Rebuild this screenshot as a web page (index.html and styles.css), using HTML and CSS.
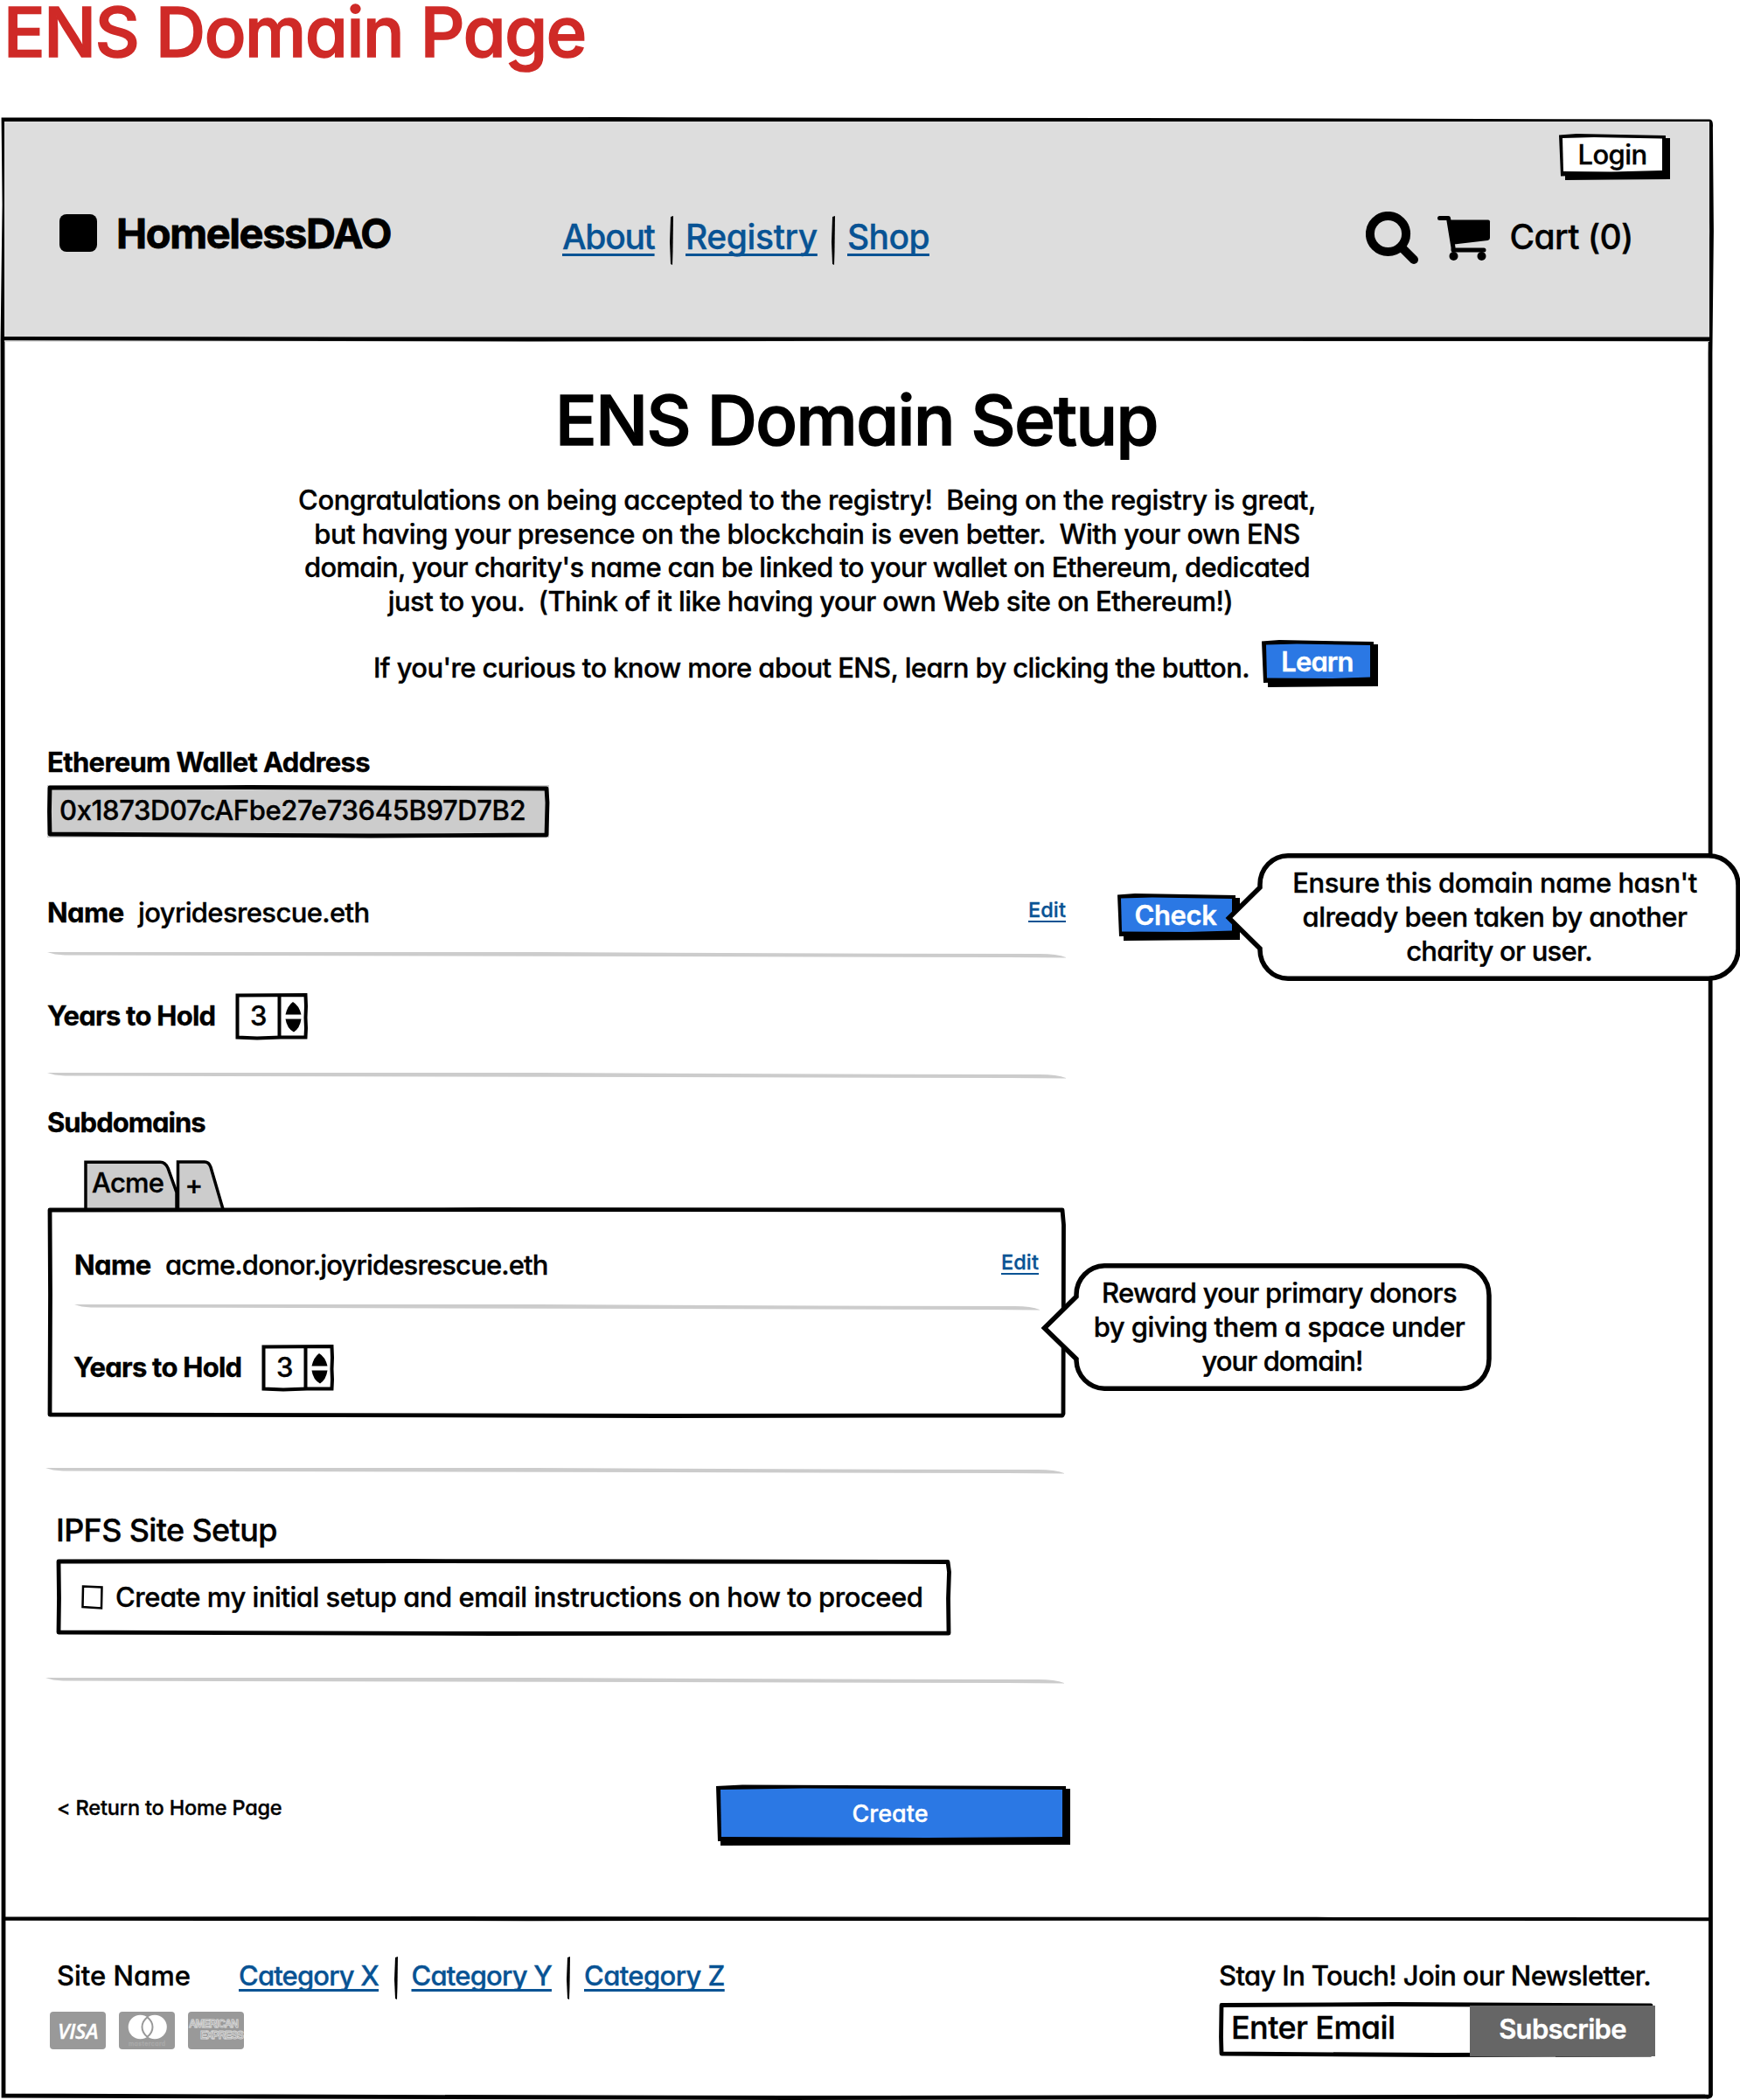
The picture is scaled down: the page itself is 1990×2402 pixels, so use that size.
FILE: index.html
```
<!DOCTYPE html>
<html lang="en">
<head>
<meta charset="utf-8">
<title>ENS Domain Page</title>
<link rel="stylesheet" href="styles.css">
</head>
<body>
<h1 class="page-title">ENS Domain Page</h1>
<div class="frame">
  <svg class="sketch frame-lines" viewBox="0 0 1960 2268" preserveAspectRatio="none">
    <path d="M4 3 L700 2.500 L1300 3.500 L1955 5 Q1957 5 1956.500 12 L1957.500 130 L1956 270 L1956.500 2262 Q1956 2265 1950 2264 L900 2265.500 L300 2264 L4 2263 L4 1200 L3 255 L5 100 Z"/>
  </svg>
  <header class="header">
    <div class="login-row">
      <a class="btn btn-login"><svg class="sketch" viewBox="0 0 127 53" preserveAspectRatio="none"><path class="shade" d="M7 5H127V52L60 52.500 7 53Z"/><path class="edge" d="M0 1.500 20 0 122 2V48L50 47 2 48.500Z"/><path class="white" d="M4 5 40 4 118 5.500V42L60 43.500 5 43Z"/></svg><span class="t-login">Login</span></a>
    </div>
    <div class="bar">
      <div class="logo"><span class="logo-mark"></span><span class="t-brand">HomelessDAO</span></div>
      <nav class="nav">
        <a class="link t-about">About</a>
        <svg class="sep" width="4" height="56" viewBox="0 0 4 56"><path d="M1 1 4 0 3.500 40 3 56 1 55 0 30Z"/></svg>
        <a class="link t-registry">Registry</a>
        <svg class="sep" width="4" height="56" viewBox="0 0 4 56"><path d="M1 1 4 0 3.500 40 3 56 1 55 0 30Z"/></svg>
        <a class="link t-shop">Shop</a>
      </nav>
      <div class="tools">
        <svg class="search" width="62" height="62" viewBox="0 0 62 62"><circle cx="25.500" cy="25.500" r="20.600"/><path d="M41 41 55 55"/></svg>
        <svg class="cart" width="61" height="62" viewBox="0 0 61 62"><path class="cart-line" d="M2.500 7.500H12.500L18 41V44H53"/><path d="M12 9.500H58Q60 9.500 60 11.500V30Q60 32.500 57.500 33L19 37.500Z"/><circle cx="18.500" cy="51" r="5"/><circle cx="50.500" cy="51" r="5"/></svg>
        <span class="t-cart">Cart (0)</span>
      </div>
    </div>
    <svg class="rule-black" viewBox="0 0 1950 7" preserveAspectRatio="none"><path d="M0 0 400 .5 1100 .8 1950 .5V6L1100 5.500 600 6.500 0 5Z"/></svg>
  </header>

  <main class="main">
    <h2 class="heading">ENS Domain Setup</h2>
    <p class="intro">
      <span class="line l1">Congratulations on being accepted to the registry!&nbsp; Being on the registry is great,</span>
      <span class="line l2">but having your presence on the blockchain is even better.&nbsp; With your own ENS</span>
      <span class="line l3">domain, your charity's name can be linked to your wallet on Ethereum, dedicated</span>
      <span class="line l4">just to you.&nbsp; (Think of it like having your own Web site on Ethereum!)</span>
    </p>
    <div class="learn">
      <span class="learn-text">If you're curious to know more about ENS, learn by clicking the button.</span>
      <a class="btn btn-learn"><svg class="sketch" viewBox="0 0 133 54" preserveAspectRatio="none"><path class="shade" d="M7 5H133V53L60 53.500 7 54Z"/><path class="edge" d="M0 1.500 20 0 128 2V49L50 48 2 49Z"/><path class="blue" d="M5 5.500 40 4.500 124 6V42.500L80 44 6 43.500Z"/></svg><span class="t-learn">Learn</span></a>
    </div>

    <label class="label wallet-label">Ethereum Wallet Address</label>
    <div class="wallet">
      <svg class="sketch" viewBox="0 0 574 60" preserveAspectRatio="none"><path class="grey" d="M0 0H574V60H0Z"/><path class="stroke" d="M3 3 230 2.500 571 4 572 20 571 57 370 58 3 56 2.500 30Z"/></svg>
      <span class="t-wallet">0x1873D07cAFbe27e73645B97D7B2</span>
    </div>

    <div class="name-row">
      <div class="field">
        <b class="label t-name">Name</b><span class="value t-domain">joyridesrescue.eth</span><a class="edit">Edit</a>
      </div>
      <a class="btn btn-check"><svg class="sketch" viewBox="0 0 140 54" preserveAspectRatio="none"><path class="shade" d="M7 5H140V53L60 53.500 7 54Z"/><path class="edge" d="M0 1.500 20 0 135 2V49L50 48 2 49Z"/><path class="blue" d="M4 5.500 40 4.500 131 6V42.500L80 44 5 43.500Z"/></svg><span class="t-check">Check</span></a>
      <div class="bubble bubble-check">
        <svg class="sketch" viewBox="0 0 590 146"><path class="bubble-line" d="M72 2.750H553A34 34 0 0 1 587 36.750V109.250A34 34 0 0 1 553 143.250H72A32 33 0 0 1 40 110.250V109L4.500 74 40 39V35.750A32 33 0 0 1 72 2.750Z"/></svg>
        <span class="line b1">Ensure this domain name hasn't</span>
        <span class="line b2">already been taken by another</span>
        <span class="line b3">charity or user.</span>
      </div>
    </div>
    <svg class="hr hr-a" viewBox="0 0 1165 8" preserveAspectRatio="none"><path d="M0 1H560L900 2.500 1135 3Q1155 3 1165 7V7.500L1100 7 700 6 20 4.500Q8 4 0 1Z"/></svg>

    <div class="years years-a">
      <b class="label t-years">Years to Hold</b>
      <div class="stepper">
        <svg class="sketch" viewBox="0 0 83 53"><path class="box" d="M2.500 2.500 80.500 2 81 15 80.500 28 81 40 80.500 50.500 52 50.500 25 51.500 2.500 50.500Z"/><path class="box" d="M50.500 2V51"/><path class="arrow" d="M57.500 24.500Q60 14 66 10Q73 14 75.500 24.500ZM57.500 29.500H75.500Q74 40 67 44.500Q59 40 57.500 29.500Z"/></svg>
        <span>3</span>
      </div>
    </div>
    <svg class="hr hr-b" viewBox="0 0 1165 8" preserveAspectRatio="none"><path d="M0 1H560L900 2.500 1135 3Q1155 3 1165 7V7.500L1100 7 700 6 20 4.500Q8 4 0 1Z"/></svg>

    <b class="label sub-label">Subdomains</b>
    <div class="tabs">
      <div class="tab tab-acme"><svg class="sketch" viewBox="0 0 106.500 55"><path d="M2 57V3H88Q94 3 97 10L107 38V57"/></svg><span class="t-acme">Acme</span></div>
      <div class="tab tab-add"><svg class="sketch" viewBox="0 0 56 55"><path d="M1.500 57V3H32Q37 3 39 9L53 57"/></svg><span>+</span></div>
    </div>
    <section class="panel">
      <svg class="sketch" viewBox="0 0 1165 241" preserveAspectRatio="none"><path class="stroke paper" d="M3 3 500 2.500 1161 3 1162.500 20 1162 236 1161 238 700 238.500 3 237 3.500 100Z"/></svg>
      <div class="field inner-name">
        <b class="label t-name">Name</b><span class="value t-sub">acme.donor.joyridesrescue.eth</span><a class="edit">Edit</a>
      </div>
      <svg class="hr hr-in" viewBox="0 0 1165 8" preserveAspectRatio="none"><path d="M0 1H560L900 2.500 1135 3Q1155 3 1165 7V7.500L1100 7 700 6 20 4.500Q8 4 0 1Z"/></svg>
      <div class="years years-in">
        <b class="label t-years">Years to Hold</b>
        <div class="stepper">
          <svg class="sketch" viewBox="0 0 83 53"><path class="box" d="M2.500 2.500 80.500 2 81 15 80.500 28 81 40 80.500 50.500 52 50.500 25 51.500 2.500 50.500Z"/><path class="box" d="M50.500 2V51"/><path class="arrow" d="M57.500 24.500Q60 14 66 10Q73 14 75.500 24.500ZM57.500 29.500H75.500Q74 40 67 44.500Q59 40 57.500 29.500Z"/></svg>
          <span>3</span>
        </div>
      </div>
      <div class="bubble bubble-reward">
        <svg class="sketch" viewBox="0 0 518 146"><path class="bubble-line" d="M73 2.750H481A32 34 0 0 1 513 36.750V109.250A32 34 0 0 1 481 143.250H73A33 33 0 0 1 41 111.250V109.500L4.500 74 41 38V35.750A33 33 0 0 1 73 2.750Z"/></svg>
        <span class="line r1">Reward your primary donors</span>
        <span class="line r2">by giving them a space under</span>
        <span class="line r3">your domain!</span>
      </div>
    </section>
    <svg class="hr hr-c" viewBox="0 0 1165 8" preserveAspectRatio="none"><path d="M0 1H560L900 2.500 1135 3Q1155 3 1165 7V7.500L1100 7 700 6 20 4.500Q8 4 0 1Z"/></svg>

    <h3 class="ipfs">IPFS Site Setup</h3>
    <div class="option">
      <svg class="sketch" viewBox="0 0 1024 88" preserveAspectRatio="none"><path class="stroke paper" d="M3 3 400 2.500 1020 3.500 1021.500 15 1020.500 45 1021 85 500 85.500 3 84 3.500 45Z"/></svg>
      <svg class="check" width="25" height="28" viewBox="0 0 25 28"><path d="M2 1.500 23.500 2.500 23 26.500 1.500 25Z"/></svg>
      <span class="t-option">Create my initial setup and email instructions on how to proceed</span>
    </div>
    <svg class="hr hr-d" viewBox="0 0 1165 8" preserveAspectRatio="none"><path d="M0 1H560L900 2.500 1135 3Q1155 3 1165 7V7.500L1100 7 700 6 20 4.500Q8 4 0 1Z"/></svg>

    <div class="actions">
      <a class="return">&lt; Return to Home Page</a>
      <a class="btn btn-create"><svg class="sketch" viewBox="0 0 405 70" preserveAspectRatio="none"><path class="shade" d="M5 5H405V69L200 69.500 5 70Z"/><path class="edge" d="M0 2 30 .5 400 2V65L150 64 2 65Z"/><path class="blue" d="M5 6 100 4.500 396 6V60L240 61 6 60Z"/></svg><span>Create</span></a>
    </div>
  </main>

  <footer class="footer">
    <svg class="rule-black" viewBox="0 0 1950 7" preserveAspectRatio="none"><path d="M0 .5 500 0 1500 1 1950 1.500V6L1300 5.500 600 6 0 5.500Z"/></svg>
    <div class="footer-cols">
      <div>
        <div class="foot-nav">
          <span class="t-site">Site Name</span>
          <a class="link cat t-x">Category X</a>
          <svg class="fsep" width="4" height="49" viewBox="0 0 4 49"><path d="M1 1 4 0 3.500 35 3 49 1 48 0 26Z"/></svg>
          <a class="link cat t-y">Category Y</a>
          <svg class="fsep" width="4" height="49" viewBox="0 0 4 49"><path d="M1 1 4 0 3.500 35 3 49 1 48 0 26Z"/></svg>
          <a class="link cat t-z">Category Z</a>
        </div>
        <div class="cards">
          <div class="card visa"><span>VISA</span></div>
          <div class="card mc"><svg width="64" height="43" viewBox="0 0 64 43"><circle cx="24.500" cy="17.500" r="13.800"/><circle cx="41" cy="17.500" r="13.800"/><path d="M32.500 6.200Q26.500 11 26.500 17.500T32.500 28.800Q38.500 24 38.500 17.500T32.500 6.200Z"/></svg><span>mastercard</span></div>
          <div class="card amex"><span>AMERICAN</span><span class="ex">EXPRESS</span></div>
        </div>
      </div>
      <div class="news">
        <span class="t-news">Stay In Touch! Join our Newsletter.</span>
        <div class="subscribe">
          <svg class="sketch" viewBox="0 0 499 63" preserveAspectRatio="none"><path class="stroke paper" d="M3 3.500 200 2.500 494 4V60L250 60.500 3 59 2.500 40Z"/></svg>
          <span class="t-email">Enter Email</span>
          <a class="sub-btn">Subscribe</a>
        </div>
      </div>
    </div>
  </footer>
</div>
</body>
</html>
```
FILE: styles.css
```
* { box-sizing: border-box; }
body {
  margin: 0;
  width: 1990px;
  height: 2402px;
  background: #fff;
  color: #000;
  font: 500 31px/38.4px Inter, "Open Sans", sans-serif;
  font-feature-settings: "cv11";
  text-underline-offset: 5px;
  -webkit-text-stroke: .35px;
}
h1, h2, h3, p { margin: 0; font-weight: 500; }
span, a, b { white-space: nowrap; }
svg { display: block; flex: none; }
.sketch { position: absolute; inset: 0; width: 100%; height: 100%; overflow: visible; }
.shade, .edge { fill: #000; }
.white { fill: #fff; }
.blue { fill: #2b78e4; }
.grey { fill: #ccc; }
.stroke { fill: none; stroke: #000; stroke-width: 4.8; stroke-linejoin: round; }
.paper { fill: #fff; }
.line { display: block; }

.page-title {
  height: 134px;
  padding-left: 4px;
  color: #cf2a27;
  font-size: 79px;
  line-height: 73px;
  letter-spacing: -1.35px;
  -webkit-text-stroke: 1.6px;
}
.frame { position: relative; width: 1960px; height: 2268px; padding: 5px 5px 0 5px; }
.frame-lines { fill: none; stroke: #000; stroke-width: 4.8; }

.header { position: relative; height: 252px; background: #ddd; padding-top: 14px; display: flex; flex-direction: column; }
.header .rule-black { margin-top: auto; }
.rule-black { width: 100%; height: 6px; fill: #000; }
.login-row { display: flex; justify-content: flex-end; padding-right: 45px; }
.btn { position: relative; display: flex; justify-content: center; flex: none; }
.btn span { position: relative; }
.btn-login { width: 127px; height: 53px; line-height: 47.5px; padding-right: 5px; }
.t-login { letter-spacing: -.6px; }
.bar { display: grid; grid-template-columns: 575px 918.5px auto; height: 62px; margin-top: 36px; padding-left: 63px; }
.logo { display: flex; align-items: center; height: 49px; font-size: 47px; font-weight: 700; }
.logo-mark { width: 43px; height: 43px; border-radius: 8px; background: #000; }
.t-brand { margin-left: 22px; padding-top: 1px; letter-spacing: -1.4px; -webkit-text-stroke: .8px; }
.nav { display: flex; align-items: center; height: 58px; font-size: 39px; }
.sep { margin: 7px 14px 0 17px; }
.link { color: #085394; text-decoration: underline; text-decoration-thickness: 2.5px; text-decoration-skip-ink: none; }
.t-about { width: 106px; letter-spacing: -1.3px; }
.t-registry { width: 150px; letter-spacing: -.4px; }
.t-shop { width: 95px; letter-spacing: -.6px; }
.tools { display: flex; }
.search { fill: none; stroke: #000; stroke-width: 10; stroke-linecap: round; }
.cart { margin-left: 20px; }
.cart-line { fill: none; stroke: #000; stroke-width: 5; stroke-linecap: round; stroke-linejoin: round; }
.t-cart { margin-left: 22px; height: 57px; line-height: 58px; font-size: 39px; letter-spacing: -.6px; }

.main { position: relative; height: 1801px; padding-left: 49px; display: flex; flex-direction: column; align-items: flex-start; }
.heading { align-self: center; height: 100px; margin: 39px 50px 0 0; font-size: 79px; line-height: 100px; letter-spacing: -1.47px; -webkit-text-stroke: 1.6px; }
.intro { width: 1162px; margin: 23.3px 0 0 288px; text-align: center; }
.l1 { letter-spacing: -.46px; margin: 0 -2px; }
.l2 { letter-spacing: -.53px; }
.l3 { letter-spacing: -.68px; }
.l4 { letter-spacing: -.57px; padding-left: 8px; }
.learn { display: flex; align-items: center; height: 54px; margin: 25px 0 0 373px; }
.learn-text { width: 1016px; padding-top: 10px; letter-spacing: -.61px; }
.btn-learn { width: 133px; height: 54px; line-height: 49px; padding-right: 6px; color: #fff; font-weight: 600; }
.t-learn { letter-spacing: -.9px; }
.label { font-weight: 700; }
.wallet-label { height: 38px; margin-top: 67px; letter-spacing: -.65px; }
.wallet { position: relative; width: 574px; height: 60px; margin-top: 7px; padding-left: 14px; line-height: 57px; }
.t-wallet { position: relative; letter-spacing: -.38px; }
.field { display: flex; width: 1165px; line-height: 43.5px; }
.t-name { width: 104px; letter-spacing: -.6px; }
.t-domain { letter-spacing: -.63px; }
.edit { margin-left: auto; height: 37px; line-height: 37px; font-size: 23.5px; letter-spacing: .1px; color: #085394; text-decoration: underline; text-decoration-thickness: 2px; text-underline-offset: 4px; }
.name-row { position: relative; display: flex; gap: 58.5px; height: 54px; margin-top: 64px; }
.btn-check { width: 140px; height: 54px; line-height: 49px; padding-right: 6px; color: #fff; font-weight: 600; }
.t-check { letter-spacing: -.4px; }
.bubble { position: absolute; padding-top: 15.5px; height: 146px; text-align: center; line-height: 38.6px; }
.bubble .line { position: relative; }
.bubble-line { fill: #fff; stroke: #000; stroke-width: 5.5; }
.bubble-check { left: 1346.5px; top: -46px; width: 590px; padding-left: 28px; }
.bubble-reward { left: 1135.5px; top: 64px; width: 518px; padding-left: 29px; }
.b1 { letter-spacing: -.48px; }
.b2 { letter-spacing: -.54px; }
.b3 { letter-spacing: -.78px; padding-left: 10px; }
.r1 { letter-spacing: -.7px; }
.r2 { letter-spacing: -.56px; }
.r3 { letter-spacing: -.95px; padding-left: 7px; }
.hr { width: 1165px; height: 8px; fill: #ccc; }
.hr-a { margin-top: 12px; }
.years { display: flex; height: 53px; line-height: 51.5px; }
.years-a { margin-top: 40.5px; }
.t-years { width: 215px; letter-spacing: -.75px; }
.stepper { position: relative; width: 83px; height: 53px; padding-left: 17px; }
.stepper span { position: relative; }
.box { fill: none; stroke: #000; stroke-width: 4; }
.arrow { fill: #000; }
.hr-b { margin-top: 36.5px; }
.sub-label { height: 38px; margin-top: 31.5px; letter-spacing: -1px; }
.tabs { display: flex; height: 55px; margin: 22.5px 0 0 42px; line-height: 53px; }
.tab { position: relative; }
.tab path { fill: #ccc; stroke: #000; stroke-width: 3.5; }
.tab span { position: relative; }
.tab-acme { width: 105.500px; padding-left: 9px; }
.tab-add { width: 56px; padding-left: 10px; line-height: 57px; }
.t-acme { letter-spacing: -.8px; }
.panel { position: relative; width: 1165px; height: 241px; padding: 44px 31px 0; }
.inner-name { width: 1103px; height: 40px; position: relative; }
.t-sub { letter-spacing: -.87px; }
.hr-in { width: 1104px; margin-top: 26px; position: relative; }
.years-in { margin-top: 39.5px; position: relative; margin-left: -1px; }
.hr-c { margin: 56.5px 0 0 -2px; }
.ipfs { height: 44px; margin: 41.5px 0 0 10px; font-size: 36px; line-height: 44px; letter-spacing: -.65px; }
.option { position: relative; display: flex; align-items: center; width: 1024px; height: 88px; margin: 11px 0 0 10px; padding-left: 29px; }
.check { position: relative; fill: none; stroke: #000; stroke-width: 2.5; }
.t-option { position: relative; margin-left: 14px; letter-spacing: -.48px; }
.hr-d { margin: 47.5px 0 0 -2px; }
.actions { display: flex; justify-content: space-between; width: 1170px; height: 70px; margin-top: 114.5px; }
.return { margin-left: 11px; line-height: 53px; font-size: 23.5px; letter-spacing: -.18px; }
.btn-create { width: 405px; height: 70px; line-height: 68px; padding-right: 7px; color: #fff; font-size: 27px; }

.footer { display: flex; flex-direction: column; }
.footer-cols { display: flex; justify-content: space-between; padding: 38px 62px 0 52px; }
.foot-nav { display: flex; align-items: center; height: 48px; padding-left: 8px; }
.t-site { width: 208px; }
.cat { text-underline-offset: 4px; width: 161.5px; }
.t-x { letter-spacing: -.85px; }
.t-y { letter-spacing: -.8px; }
.t-z { letter-spacing: -.6px; }
.fsep { margin: 4px 16px 0 16px; }
.cards { display: flex; gap: 15px; margin-top: 17px; }
.card { position: relative; width: 64px; height: 43px; border-radius: 4px; background: #999; color: #fff; overflow: hidden; }
.visa { text-align: center; font: italic 600 24px/43px "Open Sans", sans-serif; letter-spacing: -.3px; }
.mc circle { fill: #fff; }
.mc path { fill: #fff; stroke: #999; stroke-width: 2; }
.mc span { position: absolute; left: 11px; top: 34px; font-size: 7px; line-height: 6px; letter-spacing: .4px; color: #a9a9a9; }
.amex { padding-top: 8px; font: 700 12px/13px "Liberation Sans", sans-serif; letter-spacing: -1.1px; color: #999; -webkit-text-stroke: .9px #d6d6d6; }
.amex span { display: block; padding-left: 1px; }
.amex .ex { padding-left: 14px; }
.news { width: 499px; }
.t-news { display: block; height: 48px; line-height: 48px; letter-spacing: -.64px; }
.subscribe { position: relative; display: flex; height: 63px; margin-top: 6px; padding: 4px 0 0 14px; }
.t-email { position: relative; width: 273.5px; line-height: 50px; font-size: 36px; letter-spacing: -.6px; }
.sub-btn { position: relative; width: 212px; height: 58px; flex: none; background: #666; color: #fff; line-height: 53px; text-align: center; font-weight: 600; letter-spacing: -.7px; }
```
